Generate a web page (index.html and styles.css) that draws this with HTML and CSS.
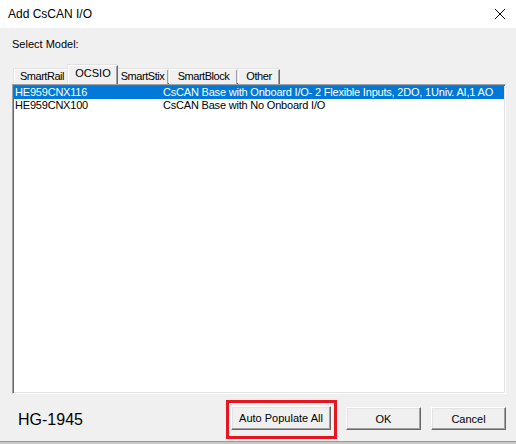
FILE: index.html
```html
<!DOCTYPE html>
<html>
<head>
<meta charset="utf-8">
<link rel="stylesheet" href="styles.css">
</head>
<body>
<div class="window">
  <div class="titlebar">
    <span class="title">Add CsCAN I/O</span>
    <svg class="close" width="12" height="12" viewBox="0 0 12 12"><path d="M1 1L11 11M11 1L1 11" stroke="#000" stroke-width="1" fill="none"/></svg>
  </div>
  <div class="main">
    <div class="label">Select Model:</div>
    <div class="tabs">
      <div class="tab t-rail">SmartRail</div>
      <div class="tab active t-ocsio">OCSIO</div>
      <div class="tab t-stix">SmartStix</div>
      <div class="tab t-block">SmartBlock</div>
      <div class="tab t-other">Other</div>
    </div>
    <div class="list">
      <div class="row selected"><span class="c1">HE959CNX116</span><span class="c2">CsCAN Base with Onboard I/O- 2 Flexible Inputs, 2DO, 1Univ. AI,1 AO</span></div>
      <div class="row"><span class="c1">HE959CNX100</span><span class="c2">CsCAN Base with No Onboard I/O</span></div>
    </div>
    <div class="footer">
      <div class="code">HG-1945</div>
      <div class="highlight"><button class="btn btn-auto">Auto Populate All</button></div>
      <button class="btn btn-ok">OK</button>
      <button class="btn btn-cancel">Cancel</button>
    </div>
  </div>
  <div class="bottom"></div>
</div>
</body>
</html>
```
FILE: styles.css
```css
html, body { margin: 0; padding: 0; }
body { width: 516px; height: 444px; overflow: hidden; font-family: "Liberation Sans", Arial, sans-serif; }
.window { width: 516px; height: 444px; display: flex; flex-direction: column; background: #f0f0f0; }
.titlebar { height: 28px; flex: none; background: #fff; display: flex; align-items: center; justify-content: space-between; padding: 0 10px 0 8px; }
.title { font-size: 12px; color: #000; }
.close { display: block; }
.main { flex: 1; display: flex; flex-direction: column; padding: 0 10px 0 12px; }
.label { margin-top: 10px; font-size: 11px; line-height: 13px; height: 13px; color: #000; }
.tabs { margin-top: 14px; height: 19px; display: flex; align-items: flex-end; padding-left: 2px; }
.tab { height: 15px; box-sizing: border-box; font-size: 11px; line-height: 13px; padding-top: 0; text-align: center; background: #f0f0f0; border-top: 1px solid #fff; border-left: 1px solid #fff; border-right: 1px solid #696969; box-shadow: inset -1px 0 #a0a0a0, -1px -1px 0 #e3e3e3; color: #000; letter-spacing: -0.45px; white-space: nowrap; }
.t-rail { width: 56px; }
.t-ocsio { width: 50px; }
.t-stix { width: 53px; }
.t-block { width: 69px; }
.t-other { width: 42px; }
.tab.active { height: 19px; margin: 0 -2px; padding-top: 1px; position: relative; z-index: 1; letter-spacing: 0; }
.list { height: 310px; box-sizing: border-box; background: #fff; border: 1px solid; border-color: #a0a0a0 #fff #fff #a0a0a0; box-shadow: inset 1px 1px #696969, inset -1px -1px #e3e3e3; padding: 1px; }
.row { height: 13px; font-size: 11px; line-height: 13px; display: flex; white-space: nowrap; color: #000; padding-left: 1px; letter-spacing: -0.2px; }
.row.selected { background: #0078d7; color: #fff; }
.c1 { width: 148px; flex: none; }
.footer { flex: 1; display: flex; align-items: flex-start; padding-top: 6px; }
.code { font-size: 16px; line-height: 18px; margin: 11px 0 0 6px; color: #000; width: 208px; }
.highlight { border: 3px solid #e8141f; padding: 3px 3px 6px 2px; }
.btn { height: 24px; box-sizing: border-box; font-family: "Liberation Sans", Arial, sans-serif; font-size: 11px; color: #000; background: #f0f0f0; border: 1px solid; border-color: #fff #696969 #696969 #fff; box-shadow: inset -1px -1px #a0a0a0, inset 1px 1px #e3e3e3; padding: 0; }
.btn-auto { width: 100px; }
.btn-ok { width: 75px; margin: 7px 0 0 9px; height: 23px; }
.btn-cancel { width: 75px; margin: 7px 0 0 10px; height: 23px; }
.bottom { height: 3px; flex: none; background: #c8c8c8; border-top: 1px solid #9a9a9a; box-sizing: border-box; }
```
